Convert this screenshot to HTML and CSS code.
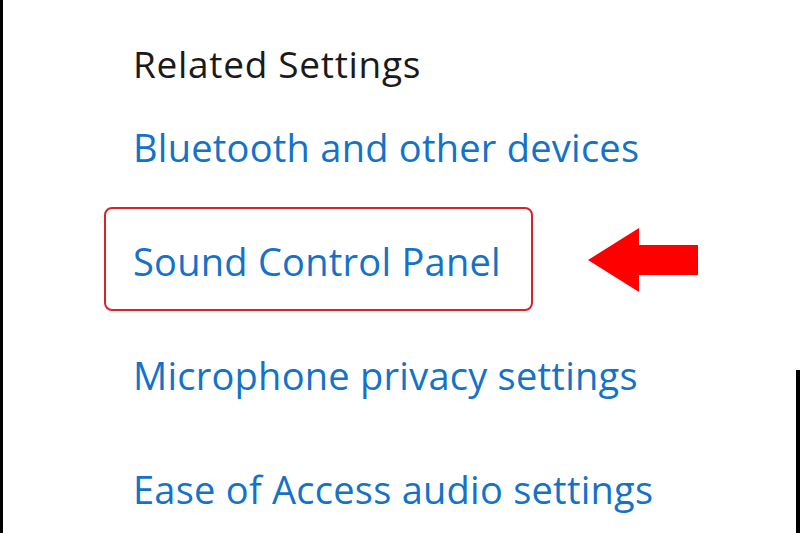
FILE: index.html
```html
<!DOCTYPE html>
<html>
<head>
<meta charset="utf-8">
<link rel="stylesheet" href="styles.css">
</head>
<body>
<div class="page">
  <div class="panel">
    <h2 class="heading">Related Settings</h2>
    <ul class="links">
      <li class="row"><a class="link">Bluetooth and other devices</a></li>
      <li class="row row-marked">
        <span class="highlight"></span>
        <a class="link">Sound Control Panel</a>
        <svg class="arrow" width="112" height="66" viewBox="0 0 112 66">
          <polygon points="0,32 51,0 51,17 110,17 110,47 51,47 51,64" fill="#ff0000"/>
        </svg>
      </li>
      <li class="row"><a class="link">Microphone privacy settings</a></li>
      <li class="row"><a class="link">Ease of Access audio settings</a></li>
    </ul>
  </div>
  <div class="edge-right"></div>
</div>
</body>
</html>
```
FILE: styles.css
```css
html, body {
  margin: 0;
  padding: 0;
  background: #ffffff;
}
.page {
  position: relative;
  width: 800px;
  height: 533px;
  box-sizing: border-box;
  border-left: 3px solid #000000;
  overflow: hidden;
  font-family: "Open Sans", "Noto Sans", sans-serif;
}
.panel {
  padding-left: 130px;
  padding-top: 44px;
}
.heading {
  margin: 0;
  font-size: 37px;
  line-height: 40px;
  font-weight: 400;
  color: #1a1a1a;
  letter-spacing: 0.7px;
}
.links {
  list-style: none;
  margin: 6px 0 0 0;
  padding: 0;
}
.row {
  position: relative;
  height: 114px;
  line-height: 114px;
}
.link {
  font-size: 38px;
  color: #1472c8;
  letter-spacing: 0.25px;
}
.highlight {
  position: absolute;
  left: -29px;
  top: 3px;
  width: 429px;
  height: 104px;
  box-sizing: border-box;
  border: 2px solid #d8232a;
  border-radius: 8px;
}
.arrow {
  position: absolute;
  left: 455px;
  top: 24px;
}
.edge-right {
  position: absolute;
  right: 0;
  top: 370px;
  width: 4px;
  height: 163px;
  background: #000000;
}
```
